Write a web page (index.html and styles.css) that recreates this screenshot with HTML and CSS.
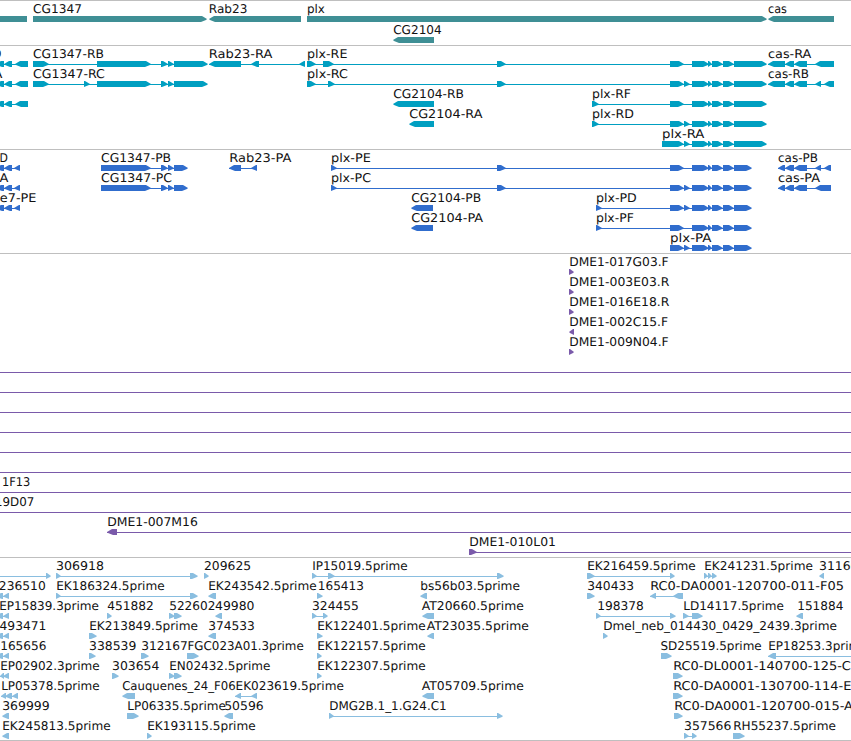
FILE: index.html
```
<!DOCTYPE html>
<html lang="en">
<head>
    <meta charset="UTF-8">
    <title>Genome Browser</title>
    <link rel="stylesheet" href="styles.css">
</head>
<body>
    <div class="browser">
        <svg class="track genes" id="genes"></svg>
        <svg class="track transcripts" id="transcripts"></svg>
        <svg class="track proteins" id="proteins"></svg>
        <svg class="track clones" id="clones"></svg>
        <svg class="track ests" id="ests"></svg>
    </div>
    <script src="tracks.js"></script>
</body>
</html>
```
FILE: styles.css
```
body {
    margin: 0;
    background: white;
    overflow: hidden;
}
.browser {
    display: flex;
    flex-direction: column;
    width: 851px;
    border-bottom: 1px solid #bfbfbf;
}
.track {
    box-sizing: border-box;
    display: block;
    width: 851px;
    border-top: 1px solid #bfbfbf;
    overflow: hidden;
}
.track text {
    font-family: "DejaVu Sans", sans-serif;
    font-size: 12px;
    fill: #111;
    text-rendering: geometricPrecision;
}
.track rect {
    shape-rendering: crispEdges;
}
.genes {
    height: 45px;
    fill: #3f8f95;
}
.transcripts {
    height: 104px;
    fill: #009fc1;
}
.proteins {
    height: 104px;
    fill: #306dcd;
}
.clones {
    height: 304px;
    fill: #7a5aaa;
}
.ests {
    height: 183px;
    fill: #8abee0;
}
```
FILE: tracks.js
```
// feature: [row, direction, exons, label, label start, label end]
const plxEnd = "692-709 708-712 712-723 723-734 ";

const tracks = {
    genes: [
        [0, "", "-10-27"],
        [0, "+", "33-207", "CG1347", 33.5, 81.5],
        [0, "-", "209-301", "Rab23", 209.3, 247],
        [0, "+", "307-767", "plx", 307.5, 324.5],
        [0, "-", "768-834", "cas", 768.5, 786.5],
        [1, "-", "393-434", "CG2104", 393.7, 441.3]
    ],
    transcripts: [
        [0, "-", "-4-4 4-12 15-28", "D", -7, 1],
        [1, "-", "-4-4 4-12 15-28", "A", -6, 2],
        [2, "-", "-4-4 4-12 15-28"],
        [0, "+", "33-49 97-151 161-168 168-174 174-208", "CG1347-RB", 33.5, 103.5],
        [1, "+", "33-49 84-90 97-151 161-168 168-174 174-208", "CG1347-RC", 33.5, 104.5],
        [0, "-", "209-241 251-259 299-305", "Rab23-RA", 209.3, 272],
        [0, "+", "307-316 323-334 497-506 670-684 " + plxEnd + "734-767", "plx-RE", 307.5, 347],
        [1, "+", "307-316 328-335 497-506 670-684 684-690 " + plxEnd + "734-767", "plx-RC", 307.5, 347.5],
        [2, "-", "393-434", "CG2104-RB", 393.7, 463.5],
        [3, "-", "409-434", "CG2104-RA", 409.7, 482],
        [2, "+", "592-599 670-684 " + plxEnd + "734-767", "plx-RF", 592.5, 630.5],
        [3, "+", "592-599 670-684 684-690 " + plxEnd + "734-767", "plx-RD", 592.5, 633.5],
        [4, "+", "662-684 684-690 " + plxEnd + "734-767", "plx-RA", 662.5, 704],
        [0, "-", "768-785 785-794 794-807 815-834", "cas-RA", 768.5, 811],
        [1, "-", "768-785 785-794 794-807 815-821 824-834", "cas-RB", 768.5, 808.5]
    ],
    proteins: [
        [0, "-", "-4-4 4-12 14-20", "D", 0, 7.5],
        [1, "-", "-4-4 4-12 14-20", "A", 0, 8],
        [2, "-", "-4-4 4-12 14-20", "e7-PE", 0.3, 36],
        [0, "+", "101-151 161-168 168-174 174-188", "CG1347-PB", 101.5, 170.7],
        [1, "+", "101-151 161-168 168-174 174-188", "CG1347-PC", 101.5, 171.5],
        [0, "-", "229-241 251-257", "Rab23-PA", 229.7, 291],
        [0, "+", "331-337 497-506 670-684 " + plxEnd + "734-752", "plx-PE", 331.5, 370.5],
        [1, "+", "331-337 497-506 670-684 684-690 " + plxEnd + "734-752", "plx-PC", 331.5, 370.7],
        [2, "-", "411-433", "CG2104-PB", 411.7, 480.7],
        [3, "-", "411-433", "CG2104-PA", 411.7, 482.7],
        [2, "+", "596-602 670-684 684-690 " + plxEnd + "734-752", "plx-PD", 596.5, 636.3],
        [3, "+", "596-602 670-684 " + plxEnd + "734-752", "plx-PF", 596.5, 633.5],
        [4, "+", "670-684 684-690 " + plxEnd + "734-752", "plx-PA", 670.5, 711],
        [0, "-", "778-785 785-794 794-807 815-821 824-831", "cas-PB", 778.5, 817.5],
        [1, "-", "778-785 785-794 794-807 815-831", "cas-PA", 778.5, 819.7]
    ],
    clones: [
        [0, "+", "569-574", "DME1-017G03.F", 569.7, 668.3],
        [1, "+", "569-574", "DME1-003E03.R", 569.7, 669],
        [2, "+", "569-574", "DME1-016E18.R", 569.7, 669],
        [3, "-", "569-574", "DME1-002C15.F", 569.7, 667.7],
        [4, "+", "569-574", "DME1-009N04.F", 569.7, 668.3],
        [5, "", "-9--8 900-901"],
        [6, "", "-9--8 900-901"],
        [7, "", "-9--8 900-901"],
        [8, "", "-9--8 900-901"],
        [9, "", "-9--8 900-901"],
        [10, "", "-9--8 900-901"],
        [11, "", "-9--8 900-901", "1F13", 2.5, 30],
        [12, "", "-9--8 900-901", "19D07", -4.5, 34],
        [13, "-", "107-117 900-910", "DME1-007M16", 107.7, 197.5],
        [14, "+", "469-477 900-910", "DME1-010L01", 469.7, 555.5]
    ],
    ests: [
        [0, "+", "-20--10 46-51"],
        [0, "+", "56-61 190-198", "306918", 56.5, 103.7],
        [0, "+", "204-209", "209625", 204.5, 250.7],
        [0, "+", "312-317 328-335 497-504", "IP15019.5prime", 312.7, 407.3],
        [0, "+", "587-595 670-675", "EK216459.5prime", 587.7, 695.3],
        [0, "+", "704-708 708-712 712-717", "EK241231.5prime", 704.7, 812.5],
        [0, "-", "819-824", "311608", 819.5, 866],

        [1, "-", "-4-3 3-9", "236510", -0.7, 45.3],
        [1, "+", "56-61 190-198", "EK186324.5prime", 56.7, 164.3],
        [1, "-", "208-216", "EK243542.5prime", 208.7, 316.3],
        [1, "+", "317-323", "165413", 318.3, 363.5],
        [1, "-", "420-427", "bs56b03.5prime", 420.7, 519.5],
        [1, "+", "587-595", "340433", 587.7, 633.7],
        [1, "-", "650-656 673-683", "RC0-DA0001-120700-011-F05", 650.7, 843.5],

        [2, "-", "-4-3 3-9", "EP15839.3prime", -0.3, 98.5],
        [2, "+", "107-112", "451882", 107.7, 153.5],
        [2, "+", "169-175 174-182", "522602", 169.7, 215],
        [2, "-", "215-222", "49980", 215.5, 254],
        [2, "+", "312-317 323-328", "324455", 312.5, 358.5],
        [2, "-", "422-434", "AT20660.5prime", 422.3, 523.5],
        [2, "+", "596-601 670-676", "198378", 597.7, 643.5],
        [2, "+", "683-689 692-703", "LD14117.5prime", 683.7, 783.5],
        [2, "-", "796-803", "151884", 797.7, 843],

        [3, "-", "-4-3 3-9", "493471", 0, 46],
        [3, "+", "89-97", "EK213849.5prime", 89.7, 197.5],
        [3, "-", "208-216", "374533", 208.7, 254.5],
        [3, "+", "317-323", "EK122401.5prime", 317.7, 425.3],
        [3, "-", "427-434", "AT23035.5prime", 427.3, 528.5],
        [3, "+", "603-608", "Dmel_neb_014430_0429_2439.3prime", 603.7, 836.5],

        [4, "-", "-4-3 3-9", "165656", 0.7, 46],
        [4, "+", "89-96", "338539", 89.5, 136],
        [4, "+", "141-149", "312167", 141.7, 187.5],
        [4, "+", "187-199", "FGC023A01.3prime", 188, 303.3],
        [4, "+", "317-322", "EK122157.5prime", 317.7, 425.3],
        [4, "+", "661-672", "SD25519.5prime", 661, 761.3],
        [4, "-", "768-776 900-910", "EP18253.3prime", 768.7, 867.3],

        [5, "-", "0-4 3-9", "EP02902.3prime", 0.7, 99.3],
        [5, "+", "112-119", "303654", 112.5, 159],
        [5, "+", "169-175 174-182", "EN02432.5prime", 169.7, 270],
        [5, "+", "317-322", "EK122307.5prime", 317.7, 425.3],
        [5, "+", "673-683", "RC0-DL0001-140700-125-C05", 673.7, 867],

        [6, "-", "1-6 5-12 12-18", "LP05378.5prime", 1.7, 99.3],
        [6, "-", "122-135", "Cauquenes_24_F06", 122.7, 235.3],
        [6, "-", "235-241 251-257", "EK023619.5prime", 236, 343.5],
        [6, "-", "422-434", "AT05709.5prime", 422.3, 523.5],
        [6, "+", "673-683", "RC0-DA0001-130700-114-E05", 673.7, 867.5],

        [7, "-", "2-9", "369999", 2.7, 49.3],
        [7, "+", "127-139", "LP06335.5prime", 127.7, 225.5],
        [7, "-", "224-233", "50596", 224.7, 263.3],
        [7, "+", "329-334 497-503", "DMG2B.1_1.G24.C1", 329.7, 446.3],
        [7, "+", "674-683", "RC0-DA0001-120700-015-A05", 674.7, 869],

        [8, "-", "2-9", "EK245813.5prime", 2.7, 110.3],
        [8, "+", "147-152", "EK193115.5prime", 147.7, 255.3],
        [8, "+", "684-689 692-697", "357566", 684.5, 731],
        [8, "+", "733-745", "RH55237.5prime", 733.7, 835.5]
    ]
};

function exonShape(start, end, y, dir) {
    const head = Math.min(6, end - start);
    if (dir === "+") {
        return `<polygon points="${start},${y} ${end - head + 1},${y} ${end},${y + 3} ${end - 1},${y + 4} ${end - head},${y + 6} ${start},${y + 6}"/>`;
    }
    if (dir === "-") {
        return `<polygon points="${end},${y} ${start + head - 1},${y} ${start},${y + 3} ${start + 1},${y + 4} ${start + head},${y + 6} ${end},${y + 6}"/>`;
    }
    return `<rect x="${start}" y="${y}" width="${end - start}" height="6"/>`;
}

for (const id in tracks) {
    const pitch = id === "genes" ? 21 : 20;
    let out = "";
    for (const [row, dir, exons, label, from, to] of tracks[id]) {
        const top = row * pitch;
        const parts = exons.split(" ").map(e => e.match(/^(-?\d+)-(-?\d+)$/).slice(1).map(Number));
        if (parts.length > 1) {
            const first = parts[0][0];
            const last = parts[parts.length - 1][1] - 1;
            out += `<rect x="${first}" y="${top + 18}" width="${last - first}" height="1"/>`;
        }
        for (const [start, end] of parts) {
            out += exonShape(start, end, top + 15, dir);
        }
        if (label) {
            out += `<text x="${(from - 0.5).toFixed(1)}" y="${top + 12}" textLength="${(to - from + 0.9).toFixed(1)}" lengthAdjust="spacingAndGlyphs">${label}</text>`;
        }
    }
    document.getElementById(id).innerHTML = out;
}
```
